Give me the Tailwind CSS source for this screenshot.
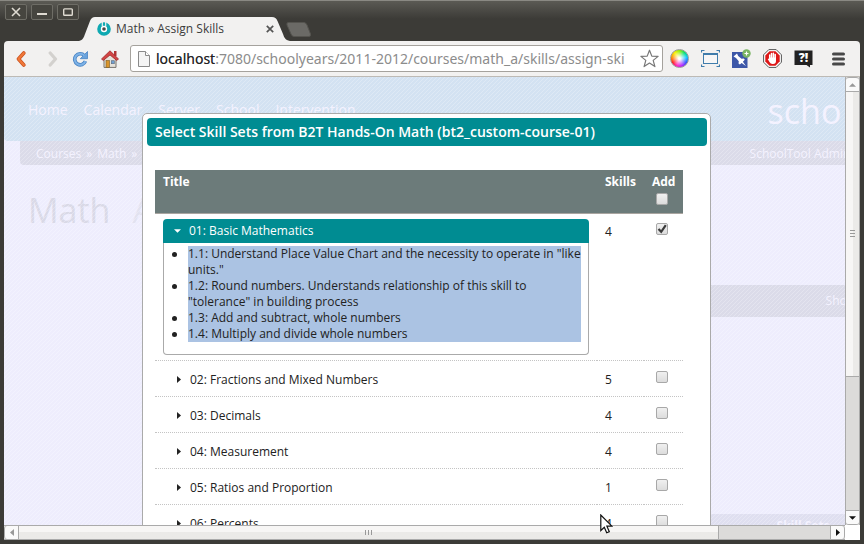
<!DOCTYPE html>
<html lang="en">
<head>
<meta charset="utf-8">
<title>Math » Assign Skills</title>
<script src="https://cdn.jsdelivr.net/npm/@tailwindcss/browser@4"></script>
</head>
<body class="flex h-screen flex-col overflow-hidden bg-[#3c3b37] font-['Open_Sans',sans-serif] text-[12px] leading-4 text-[#222]">

<!-- Title bar -->
<header class="flex h-[41px] shrink-0 items-end border-t border-[#8a8983] bg-linear-to-b from-[#5b5a54] from-0% to-[#3c3b37] to-45% pl-[5px]">
  <div class="flex gap-1 self-start pt-[3px]">
    <button aria-label="Close" class="flex h-4 w-[22px] items-center justify-center rounded-[2px] border border-[#6e6d66] bg-[#46453f]">
      <svg class="size-[10px]" viewBox="0 0 10 10" stroke="#dfdbd2" stroke-width="1.6"><path d="M1 1l8 8M9 1l-8 8"/></svg>
    </button>
    <button aria-label="Minimize" class="flex h-4 w-[22px] items-center justify-center rounded-[2px] border border-[#6e6d66] bg-[#46453f]">
      <svg class="size-[10px]" viewBox="0 0 10 10" stroke="#dfdbd2" stroke-width="2"><path d="M0 7h10"/></svg>
    </button>
    <button aria-label="Maximize" class="flex h-4 w-[22px] items-center justify-center rounded-[2px] border border-[#6e6d66] bg-[#46453f]">
      <svg class="h-2 w-[10px]" viewBox="0 0 10 8" fill="none" stroke="#dfdbd2" stroke-width="1.4"><rect x=".7" y=".9" width="8.6" height="6.4" rx=".8"/></svg>
    </button>
  </div>
  <div class="relative flex h-6 w-[211px] shrink-0 items-center pr-4 pl-[18px]">
    <svg class="absolute inset-0 h-full w-full" viewBox="0 0 211 24" preserveAspectRatio="none"><path d="M0 24C4 23 5 20 6 17L11 4Q12.500 0 16 0H193Q197 0 198.500 4L204 17C205 20 206 23 211 24Z" fill="#f2f1f0"/></svg>
    <svg class="relative size-[14px]" viewBox="0 0 14 14"><circle cx="7" cy="7" r="5" fill="#fff" stroke="#0fa9b2" stroke-width="3.600"/><path d="M5.300 0v4M8.700 0v4" stroke="#f2f1f0" stroke-width="1.200"/><circle cx="7" cy="7" r="1.800" fill="#4a4a4a"/></svg>
    <span class="relative ml-[5px] whitespace-nowrap text-[#3c3c3c]">Math » Assign Skills</span>
    <button aria-label="Close tab" class="relative ml-auto"><svg class="size-2" viewBox="0 0 8 8" stroke="#555" stroke-width="1.700"><path d="M.8.8l6.400 6.400M7.200.8L.8 7.200"/></svg></button>
  </div>
  <button aria-label="New tab" class="mb-[4px] -ml-1"><svg class="h-[15px] w-[26px]" viewBox="0 0 26 15"><path d="M2.500.5H18Q20 .5 21 3L24.500 12Q25 14.500 23 14.500H8Q6 14.500 5 12L1 3Q.3.500 2.500.5Z" fill="#6b6a66" stroke="#55544f"/></svg></button>
</header>

<div class="mx-1 mb-1 flex min-h-0 flex-1 flex-col">

<!-- Toolbar -->
<nav class="flex h-9 shrink-0 items-center rounded-t-[4px] border-b border-[#bdbab5] bg-[#f2f1f0] pr-[15px] pl-3">
  <button aria-label="Back"><svg class="h-4 w-[10px]" viewBox="0 0 10 16" fill="none" stroke-linecap="round" stroke-linejoin="round"><path d="M7.800 2L2.500 8l5.300 6" stroke="#c9501c" stroke-width="3.600"/><path d="M7.800 2L2.500 8l5.300 6" stroke="#f0783a" stroke-width="2.200"/></svg></button>
  <button aria-label="Forward" class="ml-[22px]"><svg class="h-4 w-[10px]" viewBox="0 0 10 16" fill="none" stroke="#d3d1ce" stroke-width="3.200" stroke-linecap="round" stroke-linejoin="round"><path d="M2.200 2l5.300 6-5.300 6"/></svg></button>
  <button aria-label="Reload" class="ml-[14px]"><svg class="size-4" viewBox="0 0 16 16"><path d="M12.300 4.600A5.500 5.500 0 1 0 13.400 10.200" fill="none" stroke="#4a84c4" stroke-width="3.600"/><path d="M15.500.5v7.200H8.300Z" fill="#6aa3dc" stroke="#4a84c4" stroke-width=".8"/><path d="M12.300 4.600A5.500 5.500 0 1 0 13.400 10.200" fill="none" stroke="#7db2e6" stroke-width="2"/></svg></button>
  <button aria-label="Home" class="ml-[13px]"><svg class="h-[18px] w-[18px]" viewBox="0 0 18 18"><path d="M3 8v9.400h12V8L9 3Z" fill="#e6e2da" stroke="#77736c"/><rect x="13" y="1" width="2.500" height="5" fill="#b03434"/><path d="M9 .8L.5 9l1.800 1.400L9 5l6.700 5.400L17.500 9Z" fill="#d24545" stroke="#9e2b2b" stroke-width=".8"/><rect x="5" y="10.500" width="3.500" height="7" fill="#d9952c" stroke="#7c5a20" stroke-width=".6"/><rect x="10.300" y="10.700" width="3" height="3" fill="#6f9fd2" stroke="#5c6b7d" stroke-width=".6"/></svg></button>
  <div class="ml-[11px] flex h-[27px] min-w-0 flex-1 items-center rounded-[3px] border border-[#a5a29d] bg-white pr-[3px] pl-[7px]">
    <svg class="h-4 w-3 shrink-0" viewBox="0 0 12 16"><path d="M.5.5h7l4 4v11H.5Z" fill="#f4f4f4" stroke="#8a8a8a"/><path d="M7.500.5v4h4" fill="#fff" stroke="#8a8a8a"/></svg>
    <div class="relative ml-[6px] min-w-0 flex-1 font-['Noto_Sans',sans-serif] text-[14px] leading-5">
      <input aria-label="Address" class="block w-full text-[#8c8c8c] outline-none" value="localhost:7080/schoolyears/2011-2012/courses/math_a/skills/assign-ski">
      <span aria-hidden="true" class="pointer-events-none absolute top-0 left-0 text-[#222]">localhost</span>
    </div>
    <button aria-label="Bookmark"><svg class="size-[19px]" viewBox="0 0 19 19" fill="#fff" stroke="#777" stroke-width="1.200" stroke-linejoin="round"><path d="M9.500 1.200l2.300 5.900 6.300.3-4.900 4 1.700 6.200-5.400-3.500-5.400 3.500 1.700-6.200-4.900-4 6.300-.3Z"/></svg></button>
  </div>
  <div class="ml-[7px] flex items-center gap-3">
    <button aria-label="Color picker" class="flex size-[19px] items-center justify-center rounded-full border border-[#999] bg-[radial-gradient(circle,#fff_8%,transparent_65%),conic-gradient(#8cf000,#00e070,#00c8ff,#3050ff,#b020ff,#ff20c0,#ff2020,#ff9000,#f8f000,#8cf000)]"></button>
    <button aria-label="Resize window"><svg class="size-[19px]" viewBox="0 0 19 19" fill="none"><path d="M.5 3.500v-2h3M15.500 1.500h3v2M.5 15.500v2h3M15.500 17.500h3v-2" stroke="#3f7cab" stroke-width="1.200"/><rect x="2.500" y="4.500" width="14" height="10" fill="#f6f6f6" stroke="#3f7cab"/><path d="M2 5h15" stroke="#3f7cab" stroke-width="2"/></svg></button>
    <button aria-label="Pin"><svg class="size-[19px]" viewBox="0 0 19 19"><rect x="0" y="3" width="15.500" height="16" fill="#3d57a8"/><path d="M1.500 7.500L5 4.500l1.200 2.600 3.300 2.600 2.300-.3 1 1.400-1.900 1.900 3 4.300-4.300-3.100-1.700 1.700-1.400-1.200 .3-2.200L4 9Z" fill="#fff"/><circle cx="14.500" cy="4.500" r="4.200" fill="#7ab563"/><path d="M14.500 2.500v4M12.500 4.500h4" stroke="#fff" stroke-width="1.200"/></svg></button>
    <button aria-label="Ad blocker"><svg class="size-[19px]" viewBox="0 0 19 19"><path d="M5.800.6h7.400l5.200 5.200v7.400l-5.200 5.200H5.800L.6 13.200V5.800Z" fill="#fff" stroke="#555"/><path d="M6.500 2.300h6l4.200 4.200v6l-4.200 4.200h-6L2.300 12.500v-6Z" fill="#dd1717"/><path d="M6.700 10.500V6M8.500 9V4.500M10.400 9V4.300M12.200 9.500V5.500" stroke="#fff" stroke-width="1.500" stroke-linecap="round"/><path d="M6 8.500h7v3.500q0 3-3 3H9.500Q7.500 15 6.500 13L4.800 10.200Q5 9 6 10Z" fill="#fff"/></svg></button>
    <button aria-label="Quiz" class="relative flex h-[19px] w-[19px] items-start justify-center"><svg class="absolute inset-0 size-[19px]" viewBox="0 0 19 19"><path d="M.5 1.500h18v14.500h-2.500v2.500l-3.500-2.500H.5Z" fill="#222"/></svg><span class="relative text-[12px] leading-[17px] font-extrabold text-white">?!</span></button>
    <button aria-label="Menu" class="ml-[7px]"><svg class="h-[14px] w-[13px]" viewBox="0 0 13 14" stroke="#484848" stroke-width="3" stroke-linecap="round"><path d="M1.500 2h10M1.500 7h10M1.500 12h10"/></svg></button>
  </div>
</nav>

<div class="flex min-h-0 flex-1 bg-white">
  <main class="relative min-w-0 flex-1 overflow-hidden bg-[#eeedfd]">

    <!-- Page behind the dialog -->
    <div class="flex h-full w-[116%] flex-col text-[#f3f1ff]">
      <div class="flex h-16 shrink-0 items-center rounded-b-[4px] bg-[#d3e2f2]">
        <div class="flex h-full items-center gap-4 pt-[2px] pl-6 text-[14px] whitespace-nowrap">
          <a href="#">Home</a><a href="#">Calendar</a><a href="#">Server</a><a href="#">School</a><a href="#">Intervention</a>
        </div>
        <div class="ml-auto w-[212px] pt-1 text-[34px] leading-10">scho</div>
      </div>
      <div class="ml-4 flex h-6 shrink-0 items-center rounded-b-[4px] bg-[#dbdbe9] pt-[2px] pl-4 whitespace-nowrap">
        <div class="flex gap-[5px]"><a href="#">Courses</a><span>»</span><a href="#">Math</a><span>»</span><a href="#">S</a></div>
        <div class="ml-auto w-[230px]">SchoolTool Admin</div>
      </div>
      <div class="flex min-h-0 flex-1 justify-between">
        <h1 class="flex gap-[22px] pt-[22px] pl-6 text-[34px] leading-[46px] text-[#d9d9e7]"><span>Math</span><span class="text-[#e2e2f0]">A</span></h1>
        <aside class="w-[300px] pt-[120px]">
          <h2 class="h-8 bg-[#dbdbe9] pl-[146px] leading-8">Sho</h2>
          <h2 class="mt-[197px] h-8 bg-[#dfdff0] pl-[97px] leading-6 font-bold">Skill Sets</h2>
        </aside>
      </div>
    </div>
    <div class="pointer-events-none absolute inset-0 bg-[linear-gradient(135deg,#ffffff40_12.5%,transparent_12.5%,transparent_50%,#ffffff40_50%,#ffffff40_62.5%,transparent_62.5%)] bg-[length:4px_4px]"></div>

    <!-- Dialog -->
    <section role="dialog" aria-labelledby="dialog-title" class="absolute top-9 right-[134px] left-[138px] rounded-[5px] border border-[#aaa] bg-white py-1 pr-[3px] pl-1">
      <h2 id="dialog-title" class="h-7 rounded-[4px] bg-[#008c92] px-2 text-[14px] leading-7 font-semibold whitespace-nowrap text-white">Select Skill Sets from B2T Hands-On Math (bt2_custom-course-01)</h2>
      <div class="pt-6 pr-6 pb-6 pl-2">
        <table class="w-full border-collapse">
          <thead>
            <tr class="h-[43px] border-b border-[#a9a5a0] bg-[#6c7b7a] text-left align-top text-white">
              <th class="px-2 pt-1">Title</th>
              <th class="w-[47px] px-2 pt-1">Skills</th>
              <th class="w-[39px] pt-1 pl-2">Add
                <input type="checkbox" aria-label="Add all" class="mt-[3px] ml-1 block size-3 appearance-none rounded-[2px] border border-[#a8a8a8] bg-linear-to-b from-[#f0f0f0] to-[#dcdcdc]">
              </th>
            </tr>
          </thead>
          <tbody class="align-top">
            <tr class="border-b border-dotted border-[#c4c4c4]">
              <td class="px-2 py-[5px]">
                <button aria-expanded="true" class="flex h-6 w-full items-center rounded-t-[4px] bg-[#008c92] pl-[11px] text-white">
                  <svg class="h-1 w-[7px]" viewBox="0 0 8 4" fill="#fff"><path d="M0 0h8L4 4Z"/></svg><span class="ml-2">01: Basic Mathematics</span>
                </button>
                <div class="rounded-b-[4px] border border-t-0 border-[#aaa] pt-[3px] pr-[7px] pb-3 pl-6">
                  <ul class="bg-[#abc3e3]">
                    <li class="relative before:absolute before:top-[6px] before:-left-4 before:size-[5px] before:rounded-full before:bg-[#222]">1.1: Understand Place Value Chart and the necessity to operate in "like units."</li>
                    <li class="relative before:absolute before:top-[6px] before:-left-4 before:size-[5px] before:rounded-full before:bg-[#222]">1.2: Round numbers. Understands relationship of this skill to "tolerance" in building process</li>
                    <li class="relative before:absolute before:top-[6px] before:-left-4 before:size-[5px] before:rounded-full before:bg-[#222]">1.3: Add and subtract, whole numbers</li>
                    <li class="relative before:absolute before:top-[6px] before:-left-4 before:size-[5px] before:rounded-full before:bg-[#222]">1.4: Multiply and divide whole numbers</li>
                  </ul>
                </div>
              </td>
              <td class="px-2 pt-[10px]">4</td>
              <td class="pt-[9px] pl-2">
                <div class="relative ml-1 size-3">
                  <input type="checkbox" checked aria-label="Add 01: Basic Mathematics" class="peer block size-3 appearance-none rounded-[2px] border border-[#a8a8a8] bg-linear-to-b from-[#f0f0f0] to-[#dcdcdc]">
                  <svg class="pointer-events-none invisible absolute inset-0 size-3 peer-checked:visible" viewBox="0 0 12 12" fill="none" stroke="#3a3a3a" stroke-width="2.200"><path d="M2.500 6l2.700 2.800L9.800 2.200"/></svg>
                </div>
              </td>
            </tr>
            <tr class="h-9 border-b border-dotted border-[#c4c4c4]">
              <td class="px-2 pt-[11px]"><button aria-expanded="false" class="flex items-center pl-[14px]"><svg class="h-[7px] w-1" viewBox="0 0 4 8" preserveAspectRatio="none" fill="#222"><path d="M0 0v8l4-4Z"/></svg><span class="ml-[9px]">02: Fractions and Mixed Numbers</span></button></td>
              <td class="px-2 pt-[11px]">5</td>
              <td class="pt-[10px] pl-2"><input type="checkbox" aria-label="Add 02: Fractions and Mixed Numbers" class="ml-1 block size-3 appearance-none rounded-[2px] border border-[#a8a8a8] bg-linear-to-b from-[#f0f0f0] to-[#dcdcdc]"></td>
            </tr>
            <tr class="h-9 border-b border-dotted border-[#c4c4c4]">
              <td class="px-2 pt-[11px]"><button aria-expanded="false" class="flex items-center pl-[14px]"><svg class="h-[7px] w-1" viewBox="0 0 4 8" preserveAspectRatio="none" fill="#222"><path d="M0 0v8l4-4Z"/></svg><span class="ml-[9px]">03: Decimals</span></button></td>
              <td class="px-2 pt-[11px]">4</td>
              <td class="pt-[10px] pl-2"><input type="checkbox" aria-label="Add 03: Decimals" class="ml-1 block size-3 appearance-none rounded-[2px] border border-[#a8a8a8] bg-linear-to-b from-[#f0f0f0] to-[#dcdcdc]"></td>
            </tr>
            <tr class="h-9 border-b border-dotted border-[#c4c4c4]">
              <td class="px-2 pt-[11px]"><button aria-expanded="false" class="flex items-center pl-[14px]"><svg class="h-[7px] w-1" viewBox="0 0 4 8" preserveAspectRatio="none" fill="#222"><path d="M0 0v8l4-4Z"/></svg><span class="ml-[9px]">04: Measurement</span></button></td>
              <td class="px-2 pt-[11px]">4</td>
              <td class="pt-[10px] pl-2"><input type="checkbox" aria-label="Add 04: Measurement" class="ml-1 block size-3 appearance-none rounded-[2px] border border-[#a8a8a8] bg-linear-to-b from-[#f0f0f0] to-[#dcdcdc]"></td>
            </tr>
            <tr class="h-9 border-b border-dotted border-[#c4c4c4]">
              <td class="px-2 pt-[11px]"><button aria-expanded="false" class="flex items-center pl-[14px]"><svg class="h-[7px] w-1" viewBox="0 0 4 8" preserveAspectRatio="none" fill="#222"><path d="M0 0v8l4-4Z"/></svg><span class="ml-[9px]">05: Ratios and Proportion</span></button></td>
              <td class="px-2 pt-[11px]">1</td>
              <td class="pt-[10px] pl-2"><input type="checkbox" aria-label="Add 05: Ratios and Proportion" class="ml-1 block size-3 appearance-none rounded-[2px] border border-[#a8a8a8] bg-linear-to-b from-[#f0f0f0] to-[#dcdcdc]"></td>
            </tr>
            <tr class="h-9 border-b border-dotted border-[#c4c4c4]">
              <td class="px-2 pt-[11px]"><button aria-expanded="false" class="flex items-center pl-[14px]"><svg class="h-[7px] w-1" viewBox="0 0 4 8" preserveAspectRatio="none" fill="#222"><path d="M0 0v8l4-4Z"/></svg><span class="ml-[9px]">06: Percents</span></button></td>
              <td class="px-2 pt-[11px]">4</td>
              <td class="pt-[10px] pl-2"><input type="checkbox" aria-label="Add 06: Percents" class="ml-1 block size-3 appearance-none rounded-[2px] border border-[#a8a8a8] bg-linear-to-b from-[#f0f0f0] to-[#dcdcdc]"></td>
            </tr>
          </tbody>
        </table>
      </div>
    </section>
  </main>

  <!-- Vertical scrollbar -->
  <div class="flex w-[15px] shrink-0 flex-col border-x border-[#aaa] bg-[#dcdbda]">
    <div class="flex h-[15px] shrink-0 items-center justify-center rounded-t-[3px] border-y border-[#aaa] bg-[#fafafa]"><svg class="h-1 w-[7px]" viewBox="0 0 8 4" fill="#999"><path d="M0 4h8L4 0Z"/></svg></div>
    <div class="flex flex-[285] items-center justify-center border-b border-[#aaa] bg-linear-to-r from-[#f7f6f5] from-50% to-[#ebeae8] to-50%"><svg class="h-[7px] w-[5px]" viewBox="0 0 5 7" stroke="#999"><path d="M0 .5h5M0 3.500h5M0 6.500h5"/></svg></div>
    <div class="flex-[134]"></div>
    <div class="flex h-[15px] shrink-0 items-center justify-center rounded-b-[3px] border-y border-[#aaa] bg-[#fafafa]"><svg class="h-1 w-[7px]" viewBox="0 0 8 4" fill="#111"><path d="M0 0h8L4 4Z"/></svg></div>
  </div>
</div>

<!-- Horizontal scrollbar -->
<div class="flex h-[15px] shrink-0 bg-white">
  <div class="flex min-w-0 flex-1 border-y border-[#aaa] bg-[#dcdbda]">
    <div class="flex w-[15px] shrink-0 items-center justify-center rounded-l-[3px] border-x border-[#aaa] bg-[#fafafa]"><svg class="h-[7px] w-1" viewBox="0 0 4 8" preserveAspectRatio="none" fill="#999"><path d="M4 0v8L0 4Z"/></svg></div>
    <div class="flex flex-[700] items-center justify-center border-r border-[#aaa] bg-linear-to-b from-[#f7f6f5] from-50% to-[#ebeae8] to-50%"><svg class="h-[5px] w-[7px]" viewBox="0 0 7 5" stroke="#999"><path d="M.5 0v5M3.500 0v5M6.500 0v5"/></svg></div>
    <div class="flex-[111]"></div>
    <div class="flex w-[15px] shrink-0 items-center justify-center rounded-r-[3px] border-x border-[#aaa] bg-[#fafafa]"><svg class="h-[7px] w-1" viewBox="0 0 4 8" preserveAspectRatio="none" fill="#111"><path d="M0 0v8l4-4Z"/></svg></div>
  </div>
  <div class="w-[15px] shrink-0"></div>
</div>
</div>

<!-- Mouse pointer -->
<svg class="pointer-events-none absolute top-[514px] left-[600px] h-5 w-[13px]" viewBox="0 0 13 20"><path d="M.8 1v15.500l3.500-3.300 2.400 5.600 2.600-1.100-2.400-5.500h5Z" fill="#fff" stroke="#111" stroke-width="1.200"/></svg>
</body>
</html>
